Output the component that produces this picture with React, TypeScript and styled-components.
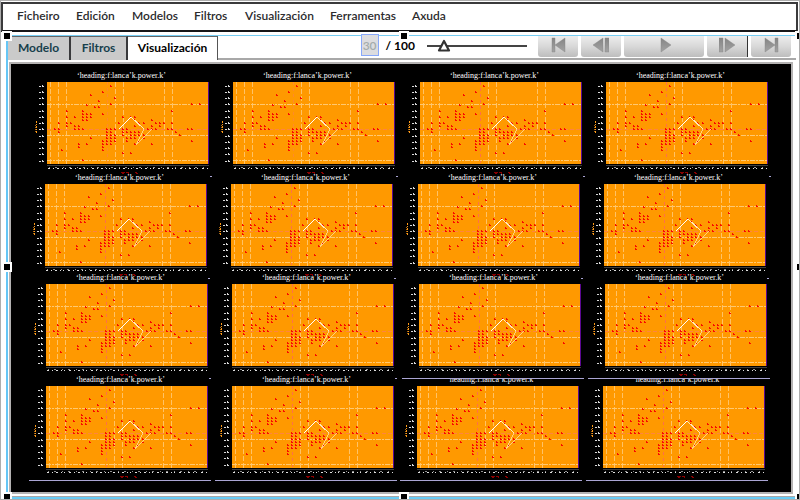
import React, { useState } from "react";
import styled, { createGlobalStyle, css } from "styled-components";

const GlobalStyle = createGlobalStyle`
  *, *::before, *::after { box-sizing: border-box; }
  body { margin: 0; background: #fff; font-family: Lato, "Noto Sans", sans-serif; }
  button, input { font: inherit; }
`;

const Page = styled.div`
  position: relative;
  display: flex;
  flex-direction: column;
  min-height: 100vh;
  overflow: hidden;
  border: 1px solid #adadad;
`;

const MenuBar = styled.nav`
  display: grid;
  grid-template-columns: 59px 56px 62px 51px 85px 82px auto;
  align-items: center;
  height: 30px;
  margin: 1px 1px 0 0;
  padding: 0 0 2px 14px;
  border: 2px solid #3a3a3c;
  border-bottom-color: #161618;
`;

const MenuItem = styled.button`
  padding: 0;
  border: 0;
  background: none;
  color: #2b2b2d;
  font-size: 12px;
  font-weight: 600;
  line-height: 16px;
  text-align: left;
  white-space: nowrap;
`;

const Workspace = styled.main`
  display: flex;
  flex: 1;
  flex-direction: column;
  margin: 3px 3px 0 5px;
  border-top: 1px solid #76cdf3;
  border-left: 2px solid #66c6f5;
`;

const Toolbar = styled.div`
  display: flex;
  align-items: stretch;
  height: 24px;
  border-bottom: 2px solid #a8a8a8;
`;

const Tabs = styled.div`
  display: flex;
  flex: 1;
`;

const Tab = styled.button<{ $active?: boolean; $width: number }>`
  width: ${(p) => p.$width}px;
  height: 24px;
  padding: 0 0 2px;
  border: 0;
  border-top: 1px solid #666;
  border-right: 2px solid #3a3a3c;
  background: #cacaca;
  color: #17404c;
  font-size: 12px;
  font-weight: 700;
  line-height: 16px;
  ${(p) =>
    p.$active &&
    css`
      border-right: 1px solid #555;
      background: #fff;
      color: #000;
    `}
`;

const Frames = styled.label`
  display: flex;
  align-items: center;
  gap: 7px;
  margin-right: 12px;
  padding-bottom: 2px;
  color: #000;
  font-size: 12px;
  font-weight: 700;
  line-height: 18px;
  white-space: nowrap;
`;

const FrameInput = styled.input`
  width: 18px;
  height: 22px;
  margin-top: -2px;
  padding: 0;
  border: 1px solid #88a8fa;
  outline: 0;
  background: #dcdcdf;
  color: #a4acac;
  font-size: 12px;
  font-weight: 600;
  text-align: center;
`;

const SliderBox = styled.div`
  position: relative;
  width: 100px;
  height: 20px;
  margin-right: 11px;
`;

const Range = styled.input`
  display: block;
  width: 100%;
  height: 20px;
  margin: 0;
  appearance: none;
  background: linear-gradient(#444, #444) center / 100% 2px no-repeat;
  &::-webkit-slider-thumb { appearance: none; width: 14px; height: 16px; }
`;

const Thumb = styled.svg`
  position: absolute;
  top: 3px;
  margin-left: -7px;
  pointer-events: none;
`;

const Controls = styled.div`
  display: flex;
  gap: 3px;
  margin-right: 5px;
`;

const Control = styled.button<{ $wide?: boolean; $marked?: boolean }>`
  display: flex;
  align-items: center;
  justify-content: center;
  width: ${(p) => (p.$wide ? 80 : 40)}px;
  height: 21px;
  padding: 0 0 4px;
  border: 0;
  border-radius: 0 0 3px 3px;
  background: linear-gradient(#ededed, #d8d8d8 50%, #bdbdbd);
  ${(p) =>
    p.$marked &&
    css`
      width: 41px;
      border-right: 1px solid #333;
      border-bottom-right-radius: 0;
    `}
`;

const Stage = styled.section`
  display: grid;
  flex: 1;
  grid-template-columns: repeat(4, 186px);
  grid-template-rows: 102px 100px 102px auto;
  justify-content: center;
  margin: 2px 3px 2px 1px;
  padding-top: 6px;
  border: 2px solid #b4b2b2;
  background: #000;
`;

const Plot = styled.svg`
  display: block;
  overflow: visible;
`;

const PlotTitle = styled.text`
  fill: #fff;
  font-family: "Liberation Serif", serif;
  font-size: 8px;
`;

const BottomEdge = styled.div`
  height: 3px;
  margin-left: 10px;
  border-top: 1px solid #a8a8a8;
  background: #68cbf4;
`;

const Handle = styled.span<{ $x: string; $y: string }>`
  position: absolute;
  left: ${(p) => p.$x};
  top: ${(p) => p.$y};
  width: 10px;
  height: 10px;
  border: 2px solid #fff;
  background: #000;
`;

const menuItems = ["Ficheiro", "Edición", "Modelos", "Filtros", "Visualización", "Ferramentas", "Axuda"];

// Each entry is a row of samples: [y, x positions].
const samples: [number, number[]][] = [
  [4, [64]], [10, [56]], [13, [44]], [16, [68]], [19, [52]], [22, [64, 145, 153]],
  [23, [40]], [25, [48, 52]], [29, [20, 36, 125]], [32, [36, 40, 44, 56]],
  [35, [20, 28, 36, 40, 44, 76, 84, 88]], [38, [36, 40, 88, 105]],
  [41, [12, 20, 24, 72, 92, 97, 109, 113, 117, 125]], [44, [20, 28, 32, 88, 105, 113]],
  [47, [8, 12, 28, 32, 36, 60, 64, 68, 76, 80, 101, 105, 109, 121, 125, 141, 145]],
  [50, [12, 60, 64, 76, 80, 84, 88, 92, 129]],
  [53, [60, 64, 68, 76, 84, 88, 92, 97, 133]], [56, [44, 60, 64, 68, 80, 84, 88, 97]],
  [59, [56, 60, 64, 68, 80, 92, 145]], [62, [32, 40, 56, 60, 64, 88, 105]],
  [65, [32, 56]], [68, [15, 56]], [71, [76, 84]], [78, [36]],
];

const columnShift = [
  [1, 1, 2, 2],
  [-1, -1, 0, 0],
  [0, 0, 1, 1],
  [0, 0, -1, -1],
];

const tickRows = [3, 9, 15, 21, 28, 34, 40, 46, 53, 59, 65, 71, 78];
const gridColumns = [3, 11, 19, 68, 76, 117, 125];

function HeadingPlot({ row, col }: { row: number; col: number }) {
  const trimmed = row === 3 && col > 1;
  const fullRule = row === 3 || (row === 2 && col > 1);
  return (
    <Plot width="186" height="100" viewBox="-17 -12 186 100" shapeRendering="crispEdges" role="img" aria-label="heading plot">
      <clipPath id={`title-${row}-${col}`}>
        <rect x="20" y={trimmed ? -7 : -12} width="120" height="12" />
      </clipPath>
      <g transform={`translate(${columnShift[row][col]} 0)`}>
        <g clipPath={`url(#title-${row}-${col})`}>
          <PlotTitle x="30" y="-4">‘heading:f:lanca’k.power.k’</PlotTitle>
        </g>
        <rect width="162" height="82" fill="#ff9900" />
        <rect x="161" width="1" height="82" fill="#5a0891" />
        {gridColumns.map((x) => (
          <path key={x} d={`M${x + 0.5} 0V82`} stroke="#ffc266" strokeDasharray="5 2" />
        ))}
        <path d="M60.5 0V82" stroke={row === 0 && col < 2 ? "#ff8a2a" : "#ff7048"} strokeDasharray="3 3" />
        <path d="M0 22.5H162M0 53.5H162M0 78.5H162" stroke="#ffc870" strokeDasharray="5 1 2 1" />
        <path d="M0 47.5H162" stroke="#ff8440" strokeDasharray="4 2" />
        <g transform="translate(-1 -1)" fill="#f80c00">
          {samples.map(([y, xs]) =>
            xs.map((x) => <path key={`${x}-${y}`} d={`M${x} ${y}h1v1h1v1h-2z`} />),
          )}
        </g>
        <path d="M72 47L84 35" fill="none" stroke="#fff" />
        <path d="M84 35L97 47" fill="none" stroke="#ffe8b8" />
        <path d="M97 47L89 63L105 47" fill="none" stroke="#ffcf80" />
        <path d="M0 83.5H162" stroke="#3e3e3e" />
        <path d="M1 86.5H161" stroke="#dedede" strokeDasharray="2 3 1 3 2 3 1 2 1 4" />
        <path d="M2 85.5H161" stroke="#8c8c8c" strokeDasharray="1 5 2 6" />
        {tickRows.map((y) => (
          <path key={y} d={`M-8 ${y + 1.5}h2m1 0h2M-5 ${y + 0.5}h1`} stroke="#d8d8d8" />
        ))}
        <path d="M-10.5 39V51" stroke="#ff9c18" strokeDasharray="2 1 1 1" />
        <path d="M-11.5 43V50" stroke="#a86614" strokeDasharray="1 1" />
        <path d="M74 90.5h4m1 0h3m6 0h2M75 91.5h2m4 0h1m7 0h2" stroke="#8b0000" />
        <path d={fullRule ? "M-17 94.5H165" : "M163 94.5h2"} stroke="#aaa5d4" />
      </g>
    </Plot>
  );
}

type IconKind = "first" | "back" | "play" | "next" | "last";

function ControlIcon({ kind }: { kind: IconKind }) {
  const shapes: Record<IconKind, React.ReactNode> = {
    first: <><path d="M2 1h3v14H2z" /><path d="M15 1v14L5 8z" /></>,
    back: <><path d="M10 1v14L0 8z" /><path d="M12 1h4v14h-4z" /></>,
    play: <path d="M5 1v14l10-7z" />,
    next: <><path d="M0 1h4v14H0z" /><path d="M6 1v14l10-7z" /></>,
    last: <><path d="M2 1v14l10-7z" /><path d="M12 1h3v14h-3z" /></>,
  };
  return (
    <svg width="16" height="16" viewBox="0 0 16 16" aria-hidden="true">
      <defs>
        <linearGradient id={`fill-${kind}`} x2="0" y2="1">
          <stop stopColor="#858585" />
          <stop offset="1" stopColor="#a3a3a3" />
        </linearGradient>
      </defs>
      <g fill={`url(#fill-${kind})`} stroke="#858585" strokeWidth=".4">{shapes[kind]}</g>
    </svg>
  );
}

const controls: { kind: IconKind; label: string }[] = [
  { kind: "first", label: "Primeiro" },
  { kind: "back", label: "Anterior" },
  { kind: "play", label: "Reproducir" },
  { kind: "next", label: "Seguinte" },
  { kind: "last", label: "Último" },
];

const handleColumns = ["1px", "calc(50% - 1px)", "calc(100% - 4px)"];
const handleRows = ["30px", "calc(50% + 12px)", "calc(100% - 7px)"];

export default function App() {
  const [frame, setFrame] = useState("30");
  const [position, setPosition] = useState(17);
  return (
    <>
      <GlobalStyle />
      <Page>
        <MenuBar>
          {menuItems.map((item) => <MenuItem key={item}>{item}</MenuItem>)}
        </MenuBar>
        <Workspace>
          <Toolbar>
            <Tabs role="tablist">
              <Tab role="tab" $width={63}>Modelo</Tab>
              <Tab role="tab" $width={57}>Filtros</Tab>
              <Tab role="tab" aria-selected $active $width={90}>Visualización</Tab>
            </Tabs>
            <Frames>
              <FrameInput value={frame} onChange={(e) => setFrame(e.target.value)} />
              / 100
            </Frames>
            <SliderBox>
              <Range type="range" aria-label="Posición" value={position} onChange={(e) => setPosition(Number(e.target.value))} />
              <Thumb width="14" height="14" viewBox="0 0 14 14" style={{ left: `${position}%` }}>
                <path d="M7 2L12 11.5H2z" fill="#fff" stroke="#333" strokeWidth="2.2" strokeLinejoin="round" />
              </Thumb>
            </SliderBox>
            <Controls>
              {controls.map(({ kind, label }) => (
                <Control key={kind} aria-label={label} $wide={kind === "play"} $marked={kind === "next"}>
                  <ControlIcon kind={kind} />
                </Control>
              ))}
            </Controls>
          </Toolbar>
          <Stage>
            {columnShift.map((shifts, row) => shifts.map((_, col) => <HeadingPlot key={`${row}-${col}`} row={row} col={col} />))}
          </Stage>
        </Workspace>
        <BottomEdge />
        {handleRows.map((y, r) =>
          handleColumns.map((x, c) => (r === 1 && c === 1 ? null : <Handle key={x + y} $x={x} $y={y} />)),
        )}
      </Page>
    </>
  );
}
